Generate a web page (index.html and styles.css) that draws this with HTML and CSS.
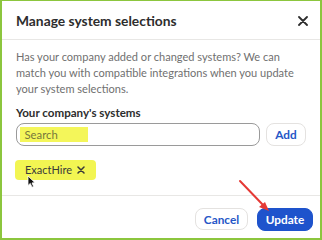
FILE: index.html
```html
<!DOCTYPE html>
<html>
<head>
<meta charset="utf-8">
<link rel="stylesheet" href="styles.css">
</head>
<body>
<div class="frame">
  <div class="dialog">
    <header class="head">
      <h1 class="title">Manage system selections</h1>
      <svg class="close" width="10" height="10" viewBox="0 0 10 10"><path d="M1 1L9 9M9 1L1 9" stroke="#2d2d2d" stroke-width="1.8" stroke-linecap="round"/></svg>
    </header>
    <section class="content">
      <p class="desc">Has your company added or changed systems? We can match you with compatible integrations when you update your system selections.</p>
      <div class="label">Your company's systems</div>
      <div class="row">
        <div class="input"><span class="hl">Search</span></div>
        <button class="btn add">Add</button>
      </div>
      <div class="chips">
        <span class="chip">ExactHire <svg class="chipx" width="8" height="8" viewBox="0 0 8 8"><path d="M1 1L7 7M7 1L1 7" stroke="#3a3a3a" stroke-width="1.5" stroke-linecap="round"/></svg></span>
        <svg class="cursor" width="9" height="13" viewBox="0 0 9 13"><path d="M1 1L1 10.5L3.3 8.4L5 12.2L6.6 11.5L5 7.9L8 7.7Z" fill="#111" stroke="#fff" stroke-width="0.8"/></svg>
      </div>
    </section>
    <footer class="foot">
      <button class="btn cancel">Cancel</button>
      <button class="btn update">Update</button>
    </footer>
  </div>
  <svg class="arrow" width="322" height="240" viewBox="0 0 322 240"><line x1="240" y1="181" x2="264" y2="206" stroke="#e53935" stroke-width="2" stroke-linecap="round"/><path d="M269 211L259 207L265 202Z" fill="#e53935"/></svg>
</div>
</body>
</html>
```
FILE: styles.css
```css
* { box-sizing: border-box; }
html, body { margin: 0; padding: 0; background: #fff; }
body { font-family: Lato, "Noto Sans", sans-serif; }
.frame {
  position: relative;
  width: 322px;
  height: 240px;
  border: 2px solid #8cc63e;
  border-top-width: 1px;
  background: #fff;
  overflow: hidden;
}
.dialog { display: flex; flex-direction: column; height: 100%; }
.head {
  display: flex;
  align-items: center;
  justify-content: space-between;
  height: 39px;
  padding: 1px 12px 0 14px;
  border-bottom: 1px solid #e8e7e5;
}
.title { margin: 0; font-size: 13.8px; font-weight: 700; color: #2d2d2d; }
.content { padding: 9px 14px 0 14px; }
.desc { margin: 0; font-size: 11.05px; line-height: 16px; color: #707070; }
.label { margin-top: 8px; font-size: 11.6px; line-height: 16px; font-weight: 700; color: #2d2d2d; }
.row { display: flex; gap: 6px; margin-top: 2px; }
.input {
  flex: 1;
  height: 23px;
  border: 1.5px solid #9a9a9a;
  border-radius: 8px;
  padding: 2px 2.5px;
  display: flex;
  align-items: center;
}
.hl { background: #f4f65a; padding: 0 30px 0 5px; font-size: 11.3px; line-height: 15px; color: #77773c; }
.btn {
  font-family: Lato, "Noto Sans", sans-serif;
  font-weight: 700;
  font-size: 11.8px;
  border-radius: 8px;
  background: #fff;
  border: 1px solid #e4e2e0;
  color: #2557c7;
  padding: 0;
}
.add { width: 40px; height: 23px; }
.chips { position: relative; margin-top: 12px; height: 20px; }
.chip {
  display: inline-flex;
  align-items: center;
  gap: 5px;
  height: 20px;
  padding: 0 11px 0 10px;
  margin-left: -1px;
  background: #f2f552;
  border-radius: 4px;
  font-size: 11px;
  color: #3a3a3a;
}
.cursor { position: absolute; left: 11px; top: 17px; }
.foot {
  display: flex;
  justify-content: flex-end;
  gap: 9px;
  margin-top: auto;
  margin-bottom: 7px;
  padding: 12px 7px 0 0;
  border-top: 1px solid #e8e7e5;
}
.cancel { width: 53px; height: 22px; }
.update { width: 56px; height: 23px; background: #1e53cc; border-color: #1e53cc; color: #fff; }
.arrow { position: absolute; left: -2px; top: -1px; pointer-events: none; }
```
